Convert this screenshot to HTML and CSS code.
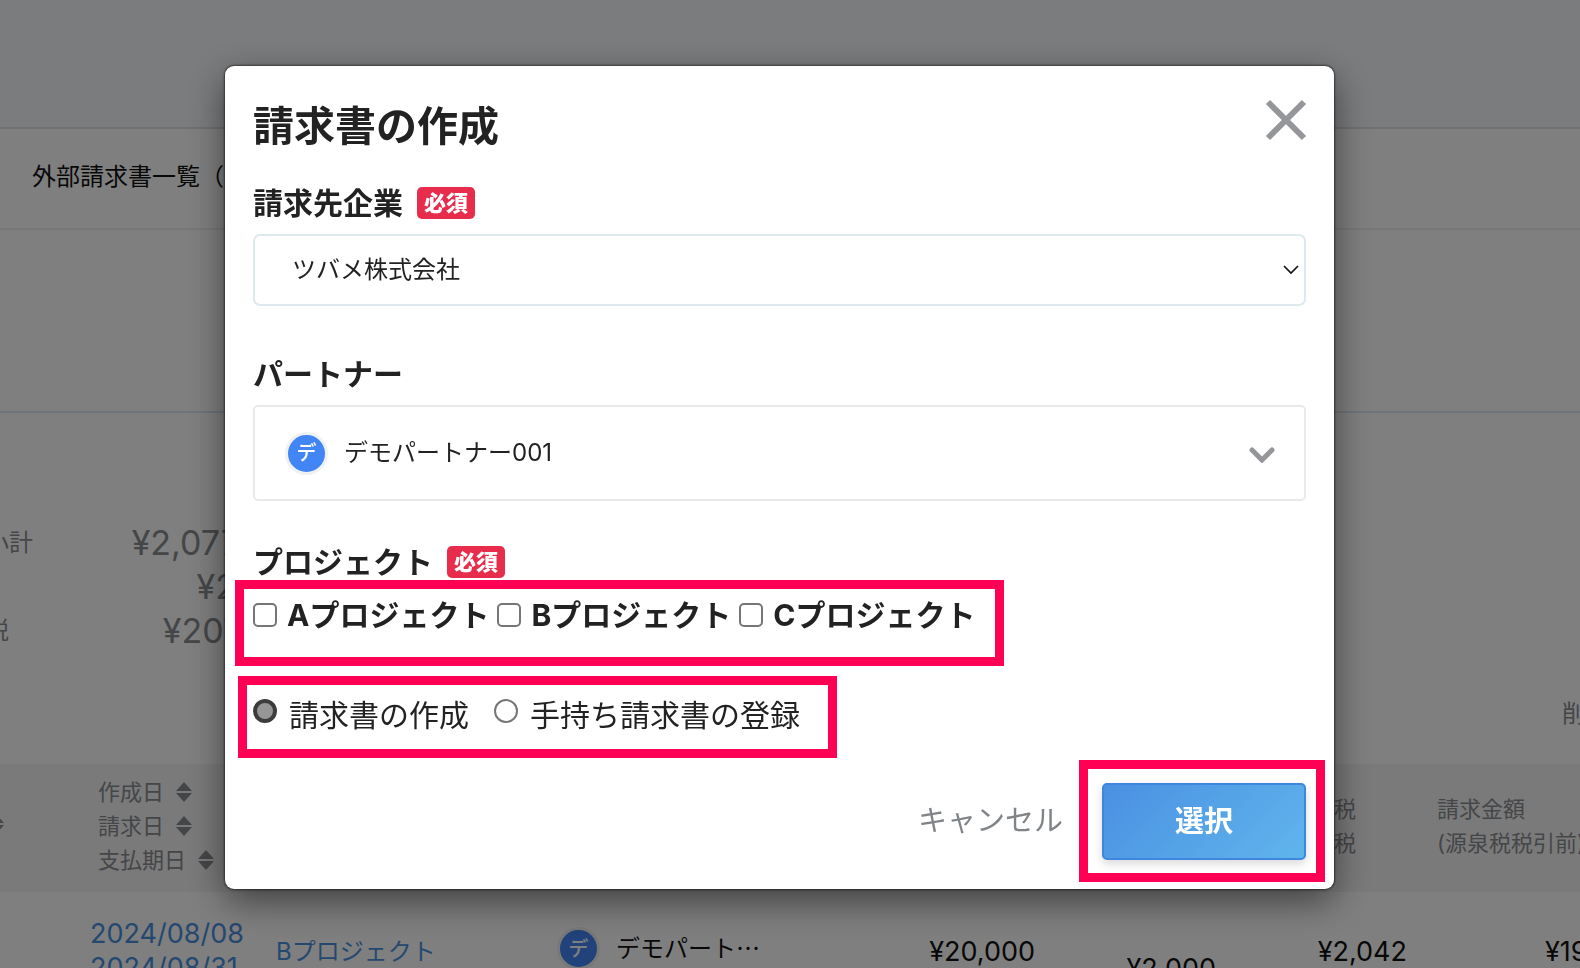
FILE: index.html
```html
<!DOCTYPE html>
<html lang="ja">
<head>
<meta charset="utf-8">
<title>請求書の作成</title>
<link rel="stylesheet" href="styles.css">
</head>
<body>
<svg class="defs" aria-hidden="true">
  <symbol id="sort" viewBox="0 0 16 20"><path d="M8 0 16 9H0zM8 20 0 11h16z" fill="currentColor"/></symbol>
</svg>
<div class="page">
  <header class="page-header"></header>
  <nav class="page-nav">外部請求書一覧（</nav>
  <section class="filters"></section>
  <section class="summary">
    <dl class="totals">
      <dt>小計</dt><dd>¥2,077,000</dd>
      <dt></dt><dd>¥2,042</dd>
      <dt>税</dt><dd>¥207,700</dd>
    </dl>
    <a class="delete" href="#">削除</a>
  </section>
  <table class="invoices">
    <colgroup><col class="c-no"><col class="c-date"><col class="c-project"><col class="c-partner"><col class="c-price"><col class="c-tax"><col class="c-wh"><col></colgroup>
    <thead>
      <tr>
        <th class="no"><svg class="sort"><use href="#sort"/></svg></th>
        <th class="dates"><div>作成日<svg class="sort"><use href="#sort"/></svg></div><div>請求日<svg class="sort"><use href="#sort"/></svg></div><div>支払期日<svg class="sort"><use href="#sort"/></svg></div></th>
        <th></th><th></th><th></th><th></th>
        <th class="wh"><div>税</div><div>税</div></th>
        <th class="amount"><div>請求金額</div><div>(源泉税税引前)</div></th>
      </tr>
    </thead>
    <tbody>
      <tr>
        <td></td>
        <td class="date"><a href="#">2024/08/08</a><a href="#">2024/08/31</a></td>
        <td class="project"><a href="#">Bプロジェクト</a></td>
        <td><div class="partner"><span class="avatar">デ</span><span class="partner-name">デモパート…</span></div></td>
        <td class="num">¥20,000</td>
        <td class="num low">¥2,000</td>
        <td class="num">¥2,042</td>
        <td class="last">¥19,958</td>
      </tr>
    </tbody>
  </table>
</div>

<div class="overlay">
  <form class="modal" role="dialog" aria-labelledby="modal-title">
    <div class="modal-head">
      <h1 id="modal-title">請求書の作成</h1>
      <button class="close" type="button" aria-label="閉じる"><svg viewBox="0 0 40 40"><path d="M2 2 38 38M38 2 2 38" fill="none" stroke="#949699" stroke-width="6"/></svg></button>
    </div>

    <div class="label-row company-label"><label for="company">請求先企業</label><span class="badge">必須</span></div>
    <div class="select-wrap">
      <select id="company"><option>ツバメ株式会社</option></select>
      <svg class="caret" viewBox="0 0 16 10"><path d="M1 1 8 8 15 1" fill="none" stroke="#111" stroke-width="1.6"/></svg>
    </div>

    <div class="label-row partner-label"><span id="partner-label">パートナー</span></div>
    <button class="partner-select" type="button" aria-labelledby="partner-label partner-value">
      <span class="avatar">デ</span><span id="partner-value">デモパートナー001</span>
      <svg class="chevron" viewBox="0 0 26 20"><path d="M3 7 13 17 23 7" fill="none" stroke="#949699" stroke-width="5" stroke-linecap="round"/></svg>
    </button>

    <div class="label-row project-label"><span id="project-label">プロジェクト</span><span class="badge">必須</span></div>
    <div class="marked projects" role="group" aria-labelledby="project-label">
      <label><input type="checkbox">Aプロジェクト</label>
      <label><input type="checkbox">Bプロジェクト</label>
      <label><input type="checkbox">Cプロジェクト</label>
    </div>

    <div class="marked modes" role="radiogroup" aria-label="作成方法">
      <label><input type="radio" name="mode" checked>請求書の作成</label>
      <label><input type="radio" name="mode">手持ち請求書の登録</label>
    </div>

    <div class="actions">
      <button class="cancel" type="button">キャンセル</button>
      <div class="marked submit-mark"><button class="submit" type="submit">選択</button></div>
    </div>
  </form>
</div>
</body>
</html>
```

FILE: styles.css
```css
* { box-sizing: border-box; }

body {
  margin: 0;
  height: 100vh;
  overflow: hidden;
  background: #fff;
  color: #222;
  font-family: Inter, "Noto Sans CJK JP", sans-serif;
  font-size: 24px;
  line-height: 32px;
}

button, select, input { font: inherit; color: inherit; margin: 0; }
button { border: 0; padding: 0; background: none; cursor: pointer; }
a { color: #4a90e2; text-decoration: none; }
.defs { display: none; }

/* Page behind the dialog */
.page { height: 100vh; overflow: hidden; color: #111; white-space: nowrap; }
.page-header { height: 129px; background: #f6f8fc; border-bottom: 2px solid #dfe0e2; }
.page-nav { padding: 31px 32px 35px; border-bottom: 2px solid #eeeff0; line-height: 33px; }
.filters { height: 183px; border-bottom: 2px solid #dfe8ee; }

.summary {
  display: flex;
  justify-content: space-between;
  align-items: flex-end;
  padding: 108px 0 34px;
  height: 351px;
}
.totals {
  display: grid;
  grid-template-columns: 100px 224px;
  align-self: flex-start;
  margin: 0 0 0 -15px;
  color: #8a8d91;
  line-height: 44px;
}
.totals dd { margin: 0; font-size: 34px; text-align: right; }
.delete { margin-right: -30px; color: #8a8d91; }

.invoices { width: 100%; table-layout: fixed; border-collapse: collapse; }
.c-no { width: 77px; }
.c-date { width: 185px; }
.c-project { width: 278px; }
.c-partner { width: 270px; }
.c-price { width: 225px; }
.c-tax { width: 181px; }
.c-wh { width: 191px; }
.invoices th {
  height: 128px;
  padding: 0 0 5px;
  background: #f4f4f4;
  color: #8a8d91;
  font-size: 22px;
  font-weight: 400;
  line-height: 34px;
  text-align: left;
}
.no .sort { margin: 0 0 0 -12px; }
.invoices th.dates { padding-left: 21px; }
.dates div { display: flex; align-items: center; }
.sort { width: 16px; height: 20px; margin-left: 12px; }
.invoices th.wh { padding-left: 118px; }
.invoices th.amount { padding-left: 30px; }
.invoices td { padding: 25px 0 0; font-size: 27px; line-height: 34px; vertical-align: top; }
.invoices .date { padding-left: 13px; }
.date a { display: block; }
.invoices .project { padding: 44px 0 0 14px; font-size: 24px; line-height: 32px; }
.partner { display: flex; align-items: center; gap: 16px; padding: 10px 0 0 17px; font-size: 24px; }
.partner-name { padding-bottom: 4px; font-family: "Noto Sans CJK JP", sans-serif; }
.invoices .num, .invoices .last { padding-top: 43px; text-align: right; }
.invoices .low { padding-top: 60px; }
.invoices .last { padding-left: 138px; text-align: left; }

.avatar {
  display: grid;
  place-items: center;
  flex: none;
  width: 43px;
  height: 43px;
  border: 3px solid #f0f1f3;
  border-radius: 50%;
  background: #4285f4;
  color: #fff;
  font-size: 20px;
  font-weight: 500;
  line-height: 32px;
}

/* Dialog */
.overlay {
  position: fixed;
  inset: 0;
  padding: 66px 246px 0 225px;
  background: rgba(0, 0, 0, 0.5);
}
.modal {
  display: flex;
  flex-direction: column;
  padding: 34px 28px 7px;
  border-radius: 9px;
  background: #fff;
  box-shadow: 0 0 2px 1px rgba(0, 0, 0, 0.5), 0 12px 36px rgba(0, 0, 0, 0.5);
}
.modal-head { display: flex; justify-content: space-between; align-items: flex-start; }
h1 { margin: 0; font-size: 41px; font-weight: 700; line-height: 52px; }
.close { width: 40px; height: 40px; }
.close svg { display: block; width: 40px; height: 40px; overflow: visible; }

.label-row { display: flex; align-items: center; gap: 14px; font-size: 30px; font-weight: 700; }
.company-label { margin: 35px 0 15px; }
.partner-label { margin: 52px 0 15px; }
.project-label { margin: 45px 0 2px; }
.badge {
  padding: 0 7px;
  border-radius: 5px;
  background: #e82c4c;
  color: #fff;
  font-size: 22px;
  font-weight: 900;
}

.select-wrap { display: grid; align-items: center; }
.select-wrap > * { grid-area: 1 / 1; }
select {
  appearance: none;
  width: 100%;
  height: 72px;
  padding: 0 37px;
  border: 2px solid #dde9ec;
  border-radius: 7px;
  background: #fff;
}
.caret { width: 16px; height: 10px; justify-self: end; margin-right: 7px; pointer-events: none; }

.partner-select {
  display: flex;
  align-items: center;
  gap: 16px;
  height: 96px;
  padding: 0 29px 0 30px;
  border: 2px solid #e9e9eb;
  border-radius: 5px;
}
.chevron { width: 26px; height: 20px; margin-left: auto; }

.marked { width: fit-content; border: 9px solid #ff0054; }
.marked label { display: flex; align-items: center; }
.projects {
  display: flex;
  gap: 8px;
  margin-left: -18px;
  padding: 10px 20px 26px 9px;
  font-size: 30px;
  font-weight: 700;
}
.projects label { gap: 10px; }
.modes {
  display: flex;
  gap: 25px;
  margin: 10px 0 0 -15px;
  padding: 14px 28px 18px 6px;
  font-size: 30px;
}
.marked.modes label { gap: 12px; align-items: flex-start; }

input {
  appearance: none;
  flex: none;
  width: 24px;
  height: 24px;
  border: 2px solid #767676;
  background: #fff;
}
input[type="checkbox"] { border-radius: 5px; }
input[type="radio"] { border-radius: 50%; }
input[type="radio"]:checked { border: 4px solid #3c3c3c; background: #969696; }

.actions { display: flex; justify-content: flex-end; align-items: center; gap: 16px; margin: 2px -19px 0 0; }
.cancel { color: #808488; font-size: 29px; }
.submit-mark { padding: 14px 10px 13px 14px; }
.submit {
  display: block;
  width: 204px;
  height: 77px;
  border: 2px solid #3f86e0;
  border-radius: 5px;
  background: linear-gradient(135deg, #4a90e2, #60b5ec);
  box-shadow: 0 4px 10px rgba(0, 0, 0, 0.15);
  color: #fff;
  font-size: 29px;
  font-weight: 600;
}
```
